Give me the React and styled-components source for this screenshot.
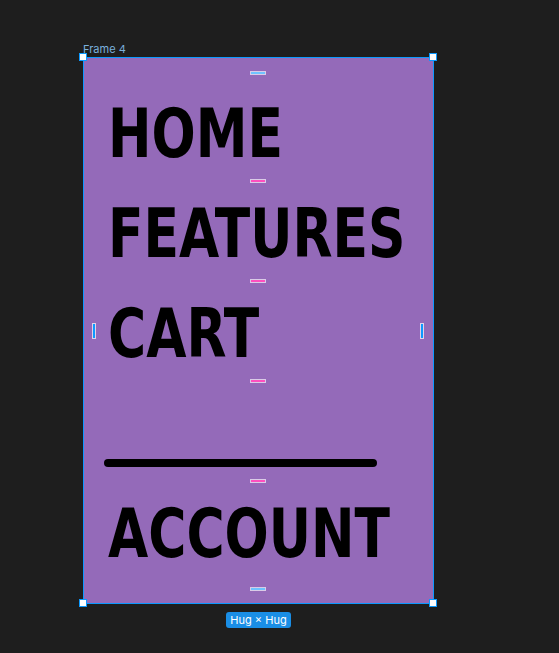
import React from 'react';
import styled, { createGlobalStyle } from 'styled-components';

const COLOR = {
  canvas: '#1e1e1e',
  frame: '#946ab9',
  select: '#0d99ff',
  label: '#7ab0dc',
  badge: '#1a8ee6',
  cyan: '#6fc3ff',
  pink: '#ff4fbf',
  ink: '#000000',
};

const GlobalStyle = createGlobalStyle`
  html, body {
    margin: 0;
    padding: 0;
    background: ${COLOR.canvas};
    font-family: Inter, 'Liberation Sans', sans-serif;
  }
`;

const Canvas = styled.div`
  min-height: 653px;
  padding: 43px 0 0 83px;
  box-sizing: border-box;
`;

const Selection = styled.div`
  display: flex;
  flex-direction: column;
  align-items: flex-start;
  width: 351px;
`;

const Label = styled.div`
  height: 14px;
  font-size: 11px;
  line-height: 12px;
  color: ${COLOR.label};
`;

const Frame = styled.div`
  position: relative;
  box-sizing: border-box;
  width: 351px;
  display: flex;
  flex-direction: column;
  padding: 0 22px 0 20px;
  background: ${COLOR.frame};
  border: 1px solid ${COLOR.select};
`;

const Handle = styled.span`
  position: absolute;
  width: 8px;
  height: 8px;
  box-sizing: border-box;
  background: #fff;
  border: 1px solid ${COLOR.select};
  ${(p) => (p.$top ? 'top: -5px;' : 'bottom: -4px;')}
  ${(p) => (p.$left ? 'left: -5px;' : 'right: -4px;')}
`;

// spacing indicator, horizontal line centred in a gap or a padding band
const Space = styled.div`
  height: ${(p) => p.$h}px;
  display: flex;
  align-items: center;
  justify-content: center;
  &::after {
    content: '';
    width: 14px;
    height: 2px;
    background: ${(p) => p.$color};
    outline: 1px solid rgba(255, 255, 255, 0.65);
  }
`;

const SideMark = styled.span`
  position: absolute;
  top: 50%;
  width: 2px;
  height: 14px;
  margin-top: -7px;
  background: ${COLOR.select};
  outline: 1px solid rgba(255, 255, 255, 0.7);
  ${(p) => (p.$left ? 'left: 9px;' : 'right: 10px;')}
`;

const Item = styled.div`
  height: 88px;
  box-sizing: border-box;
  padding: 12px 0 0 4px;
  font-family: 'DejaVu Sans Condensed', 'DejaVu Sans', sans-serif;
  font-weight: 700;
  font-size: 68px;
  line-height: 70px;
  color: ${COLOR.ink};
  white-space: nowrap;
  span {
    display: inline-block;
    transform: scaleX(0.85);
    transform-origin: left center;
  }
`;

const DividerRow = styled.div`
  height: 88px;
  .bar {
    margin-top: 72px;
    width: 273px;
    height: 8px;
    border-radius: 4px;
    background: ${COLOR.ink};
  }
`;

const Badge = styled.div`
  align-self: center;
  margin-top: 8px;
  padding: 0 4px;
  height: 16px;
  line-height: 16px;
  border-radius: 3px;
  background: ${COLOR.badge};
  color: #fff;
  font-size: 11px;
`;

const links = ['HOME', 'FEATURES', 'CART'];

export default function App() {
  return (
    <>
      <GlobalStyle />
      <Canvas>
        <Selection>
          <Label>Frame 4</Label>
          <Frame>
            <Space $h={29} $color={COLOR.cyan} />
            {links.map((l) => (
              <React.Fragment key={l}>
                <Item>
                  <span>{l}</span>
                </Item>
                <Space $h={12} $color={COLOR.pink} />
              </React.Fragment>
            ))}
            <DividerRow>
              <div className="bar" />
            </DividerRow>
            <Space $h={12} $color={COLOR.pink} />
            <Item>
              <span>ACCOUNT</span>
            </Item>
            <Space $h={28} $color={COLOR.cyan} />
            <SideMark $left />
            <SideMark />
            <Handle $top $left />
            <Handle $top />
            <Handle $left />
            <Handle />
          </Frame>
          <Badge>Hug × Hug</Badge>
        </Selection>
      </Canvas>
    </>
  );
}
